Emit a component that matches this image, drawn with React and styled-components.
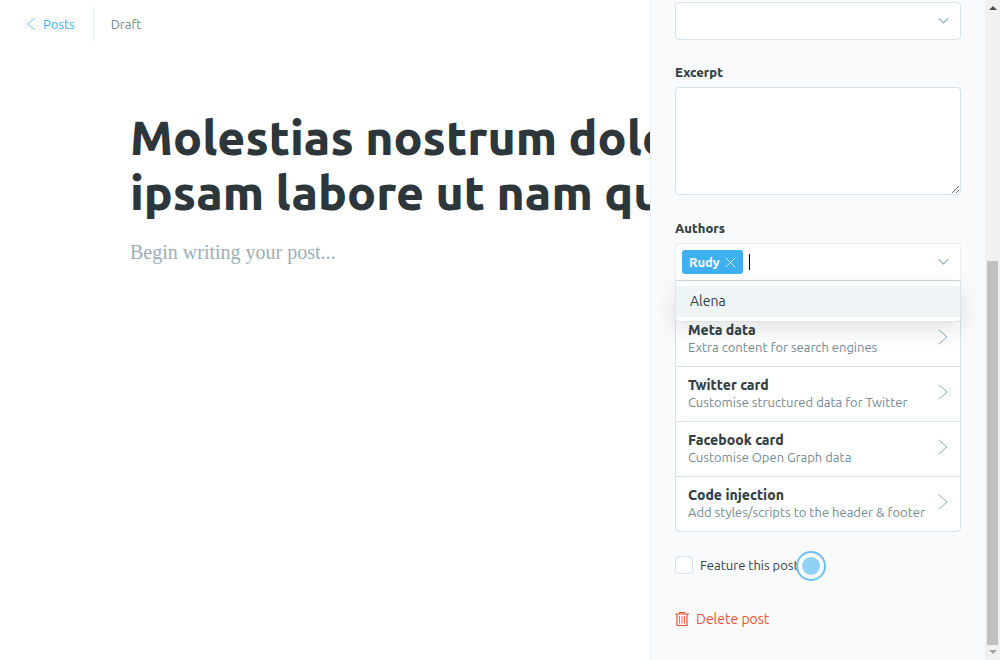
import React from "react";
import styled, { createGlobalStyle, css } from "styled-components";

const color = {
  ink: "#343f44",
  heading: "#2d363b",
  blue: "#3eb0ef",
  mid: "#738a94",
  light: "#9baeb8",
  line: "#d5e3ec",
  panel: "#f9fafc",
  red: "#f05230",
};

const Global = createGlobalStyle`
  *, *::before, *::after { box-sizing: border-box; }
  body {
    margin: 0;
    overflow: hidden;
    background: #fff;
    color: ${color.ink};
    font-family: Ubuntu, "Noto Sans", sans-serif;
    font-size: 13px;
  }
  button, input, select, textarea { font: inherit; color: inherit; }
`;

const Screen = styled.div`
  display: flex;
  height: 100vh;
`;

const Editor = styled.main`
  flex: 1;
  min-width: 0;
  overflow: hidden;
`;

const Header = styled.header`
  display: flex;
  align-items: center;
  height: 48px;
  padding-left: 26px;
`;

const BackLink = styled.a`
  display: flex;
  align-items: center;
  gap: 7px;
  height: 36px;
  padding-right: 18px;
  border-right: 1px solid #e3ecf2;
  color: ${color.blue};
  text-decoration: none;
`;

const Status = styled.span`
  padding-left: 17px;
  color: ${color.mid};
`;

const Post = styled.article`
  padding: 62px 0 0 130px;
`;

const Title = styled.h1`
  margin: 0 0 16px;
  color: ${color.heading};
  font-size: 48px;
  font-weight: 800;
  line-height: 55px;
  white-space: pre;
`;

const Placeholder = styled.p`
  margin: 0;
  color: ${color.light};
  font: 20px/32px "Liberation Serif", serif;
`;

const Sidebar = styled.aside`
  display: flex;
  flex: 0 0 350px;
  border-left: 1px solid #e3eef6;
  background: ${color.panel};
`;

const Settings = styled.form`
  flex: 1;
  min-width: 0;
  padding: 2px 24px;
`;

const Field = styled.div`
  position: relative;
  margin-bottom: ${(p) => p.$gap || 23}px;
`;

const Label = styled.label`
  display: block;
  margin-bottom: 5px;
  font-size: 13px;
  font-weight: 800;
  line-height: 19px;
`;

const box = css`
  display: block;
  width: 100%;
  border: 1px solid ${color.line};
  border-radius: 4px;
  background: #fff;
  outline: none;
`;

const Select = styled.select`
  ${box}
  height: 38px;
  padding: 0 12px;
  appearance: none;
`;

const TextArea = styled.textarea`
  ${box}
  height: 108px;
  padding: 8px 12px;
  resize: vertical;
`;

const SelectIcon = styled.span`
  position: absolute;
  top: 12px;
  right: 12px;
  display: flex;
  pointer-events: none;
`;

const Tokens = styled.div`
  display: flex;
  align-items: center;
  height: 38px;
  padding: 0 11px 0 6px;
  border: 1px solid #ebeef0;
  border-bottom-color: #ccd6dc;
  border-radius: 4px 4px 0 0;
  background: #fff;
`;

const Token = styled.button`
  display: flex;
  align-items: center;
  gap: 5px;
  height: 24px;
  padding: 0 7px;
  border: 0;
  border-radius: 3px;
  background: ${color.blue};
  color: #fff;
  font-weight: 600;
`;

const Caret = styled.span`
  width: 1px;
  height: 16px;
  margin-left: 6px;
  background: #000;
`;

const TokenInput = styled.input`
  flex: 1;
  min-width: 0;
  padding: 0;
  border: 0;
  outline: none;
  background: none;
`;

const Menu = styled.div`
  position: absolute;
  top: 100%;
  left: 0;
  right: 0;
  padding: 5px 0 4px;
  border: 1px solid #dde4e8;
  border-top: 0;
  border-radius: 0 0 4px 4px;
  background: #fff;
  box-shadow: 0 8px 20px rgba(52, 63, 68, 0.14);
  z-index: 1;
`;

const Option = styled.button`
  display: block;
  width: 100%;
  padding: 0 14px;
  border: 0;
  background: #eff4f7;
  font-size: 14px;
  line-height: 31px;
  text-align: left;
`;

const CardList = styled.nav`
  margin: 30px 0 24px;
  border: 1px solid ${color.line};
  border-radius: 4px;
  background: #fff;
`;

const Card = styled.button`
  display: flex;
  align-items: flex-start;
  justify-content: space-between;
  width: 100%;
  height: 55px;
  padding: 9px 12px 0;
  border: 0;
  border-bottom: 1px solid ${color.line};
  background: none;
  text-align: left;

  &:last-child {
    height: 54px;
    border-bottom: 0;
  }

  svg {
    margin-top: 8px;
  }
`;

const CardTitle = styled.strong`
  display: block;
  font-size: 14px;
  font-weight: 800;
  line-height: 18px;
`;

const CardText = styled.span`
  display: block;
  color: ${color.mid};
  font-size: 13px;
  line-height: 17px;
`;

const Feature = styled.label`
  position: relative;
  display: flex;
  align-items: center;
  gap: 7px;
  width: max-content;
  height: 18px;
  margin-bottom: 32px;
`;

const Checkbox = styled.input`
  width: 18px;
  height: 18px;
  margin: 0;
  border: 1px solid ${color.line};
  border-radius: 4px;
  background: #fff;
  appearance: none;
`;

const Pointer = styled.span`
  position: absolute;
  top: -5px;
  left: 121px;
  width: 30px;
  height: 30px;
  padding: 4px;
  border: 2px solid #6fc0ee;
  border-radius: 50%;
  background: rgba(249, 250, 252, 0.5);

  &::before {
    content: "";
    display: block;
    width: 18px;
    height: 18px;
    margin: 0 auto;
    border-radius: 50%;
    background: rgba(126, 201, 244, 0.85);
  }
`;

const DeleteButton = styled.button`
  display: flex;
  align-items: center;
  gap: 7px;
  padding: 0;
  border: 0;
  background: none;
  color: ${color.red};
  font-size: 14px;
  line-height: 26px;
`;

const ScrollTrack = styled.div`
  display: flex;
  flex: 0 0 15px;
  flex-direction: column;
  align-items: center;
  justify-content: space-between;
  padding: 6px 0;
  background: #f1f1f1;
`;

const ScrollThumb = styled.div`
  width: 11px;
  height: 384px;
  margin: auto 0 5px;
  background: #c1c1c1;
`;

const Stroke = ({ d, w, h, c, s = 1 }) => (
  <svg width={w} height={h} viewBox={`0 0 ${w} ${h}`} fill="none" stroke={c} strokeWidth={s} strokeLinecap="round" strokeLinejoin="round" aria-hidden="true">
    <path d={d} />
  </svg>
);

const Chevron = () => <Stroke w={11} h={14} c="#9fb5c0" s={1.2} d="M1 4.5 5.5 9 10 4.5" />;

const Trash = () => (
  <svg width="14" height="14" viewBox="0 0 14 14" fill="none" stroke={color.red} aria-hidden="true">
    <path d="M0 2h14M4.5 2V.5h5V2M2 2.5v11h10v-11" strokeWidth="1.2" />
    <path d="M4.5 4v7.5M7 4v7.5M9.5 4v7.5" strokeOpacity=".85" />
  </svg>
);

const cards = [
  ["Meta data", "Extra content for search engines"],
  ["Twitter card", "Customise structured data for Twitter"],
  ["Facebook card", "Customise Open Graph data"],
  ["Code injection", "Add styles/scripts to the header & footer"],
];

export default function App() {
  return (
    <>
      <Global />
      <Screen>
        <Editor>
          <Header>
            <BackLink href="#posts">
              <Stroke w={10} h={12} c="#72c5f2" d="M8.5.5 1.5 6l7 5.5" />
              Posts
            </BackLink>
            <Status>Draft</Status>
          </Header>
          <Post>
            <Title>{"Molestias nostrum dolor\nipsam labore ut nam qui"}</Title>
            <Placeholder>Begin writing your post...</Placeholder>
          </Post>
        </Editor>
        <Sidebar>
          <Settings onSubmit={(e) => e.preventDefault()}>
            <Field>
              <Select aria-label="Tags" />
              <SelectIcon><Chevron /></SelectIcon>
            </Field>
            <Field $gap={24}>
              <Label htmlFor="excerpt">Excerpt</Label>
              <TextArea id="excerpt" />
            </Field>
            <Field>
              <Label htmlFor="authors">Authors</Label>
              <Tokens>
                <Token type="button">
                  Rudy
                  <Stroke w={11} h={11} c="#d8effc" d="M1 1l9 9M10 1l-9 9" />
                </Token>
                <Caret />
                <TokenInput id="authors" />
                <Chevron />
              </Tokens>
              <Menu>
                <Option type="button">Alena</Option>
              </Menu>
            </Field>
            <CardList>
              {cards.map(([title, text]) => (
                <Card type="button" key={title}>
                  <span>
                    <CardTitle>{title}</CardTitle>
                    <CardText>{text}</CardText>
                  </span>
                  <Stroke w={10} h={16} c="#93a8b3" d="M1 1l8 7-8 7" />
                </Card>
              ))}
            </CardList>
            <Feature>
              <Checkbox type="checkbox" />
              Feature this post
              <Pointer />
            </Feature>
            <DeleteButton type="button">
              <Trash />
              Delete post
            </DeleteButton>
          </Settings>
          <ScrollTrack aria-hidden="true">
            <svg width="8" height="4" viewBox="0 0 8 4"><path d="M0 4 4 0l4 4z" fill="#505050" /></svg>
            <ScrollThumb />
            <svg width="8" height="4" viewBox="0 0 8 4"><path d="M0 0h8L4 4z" fill="#a3a3a3" /></svg>
          </ScrollTrack>
        </Sidebar>
      </Screen>
    </>
  );
}
